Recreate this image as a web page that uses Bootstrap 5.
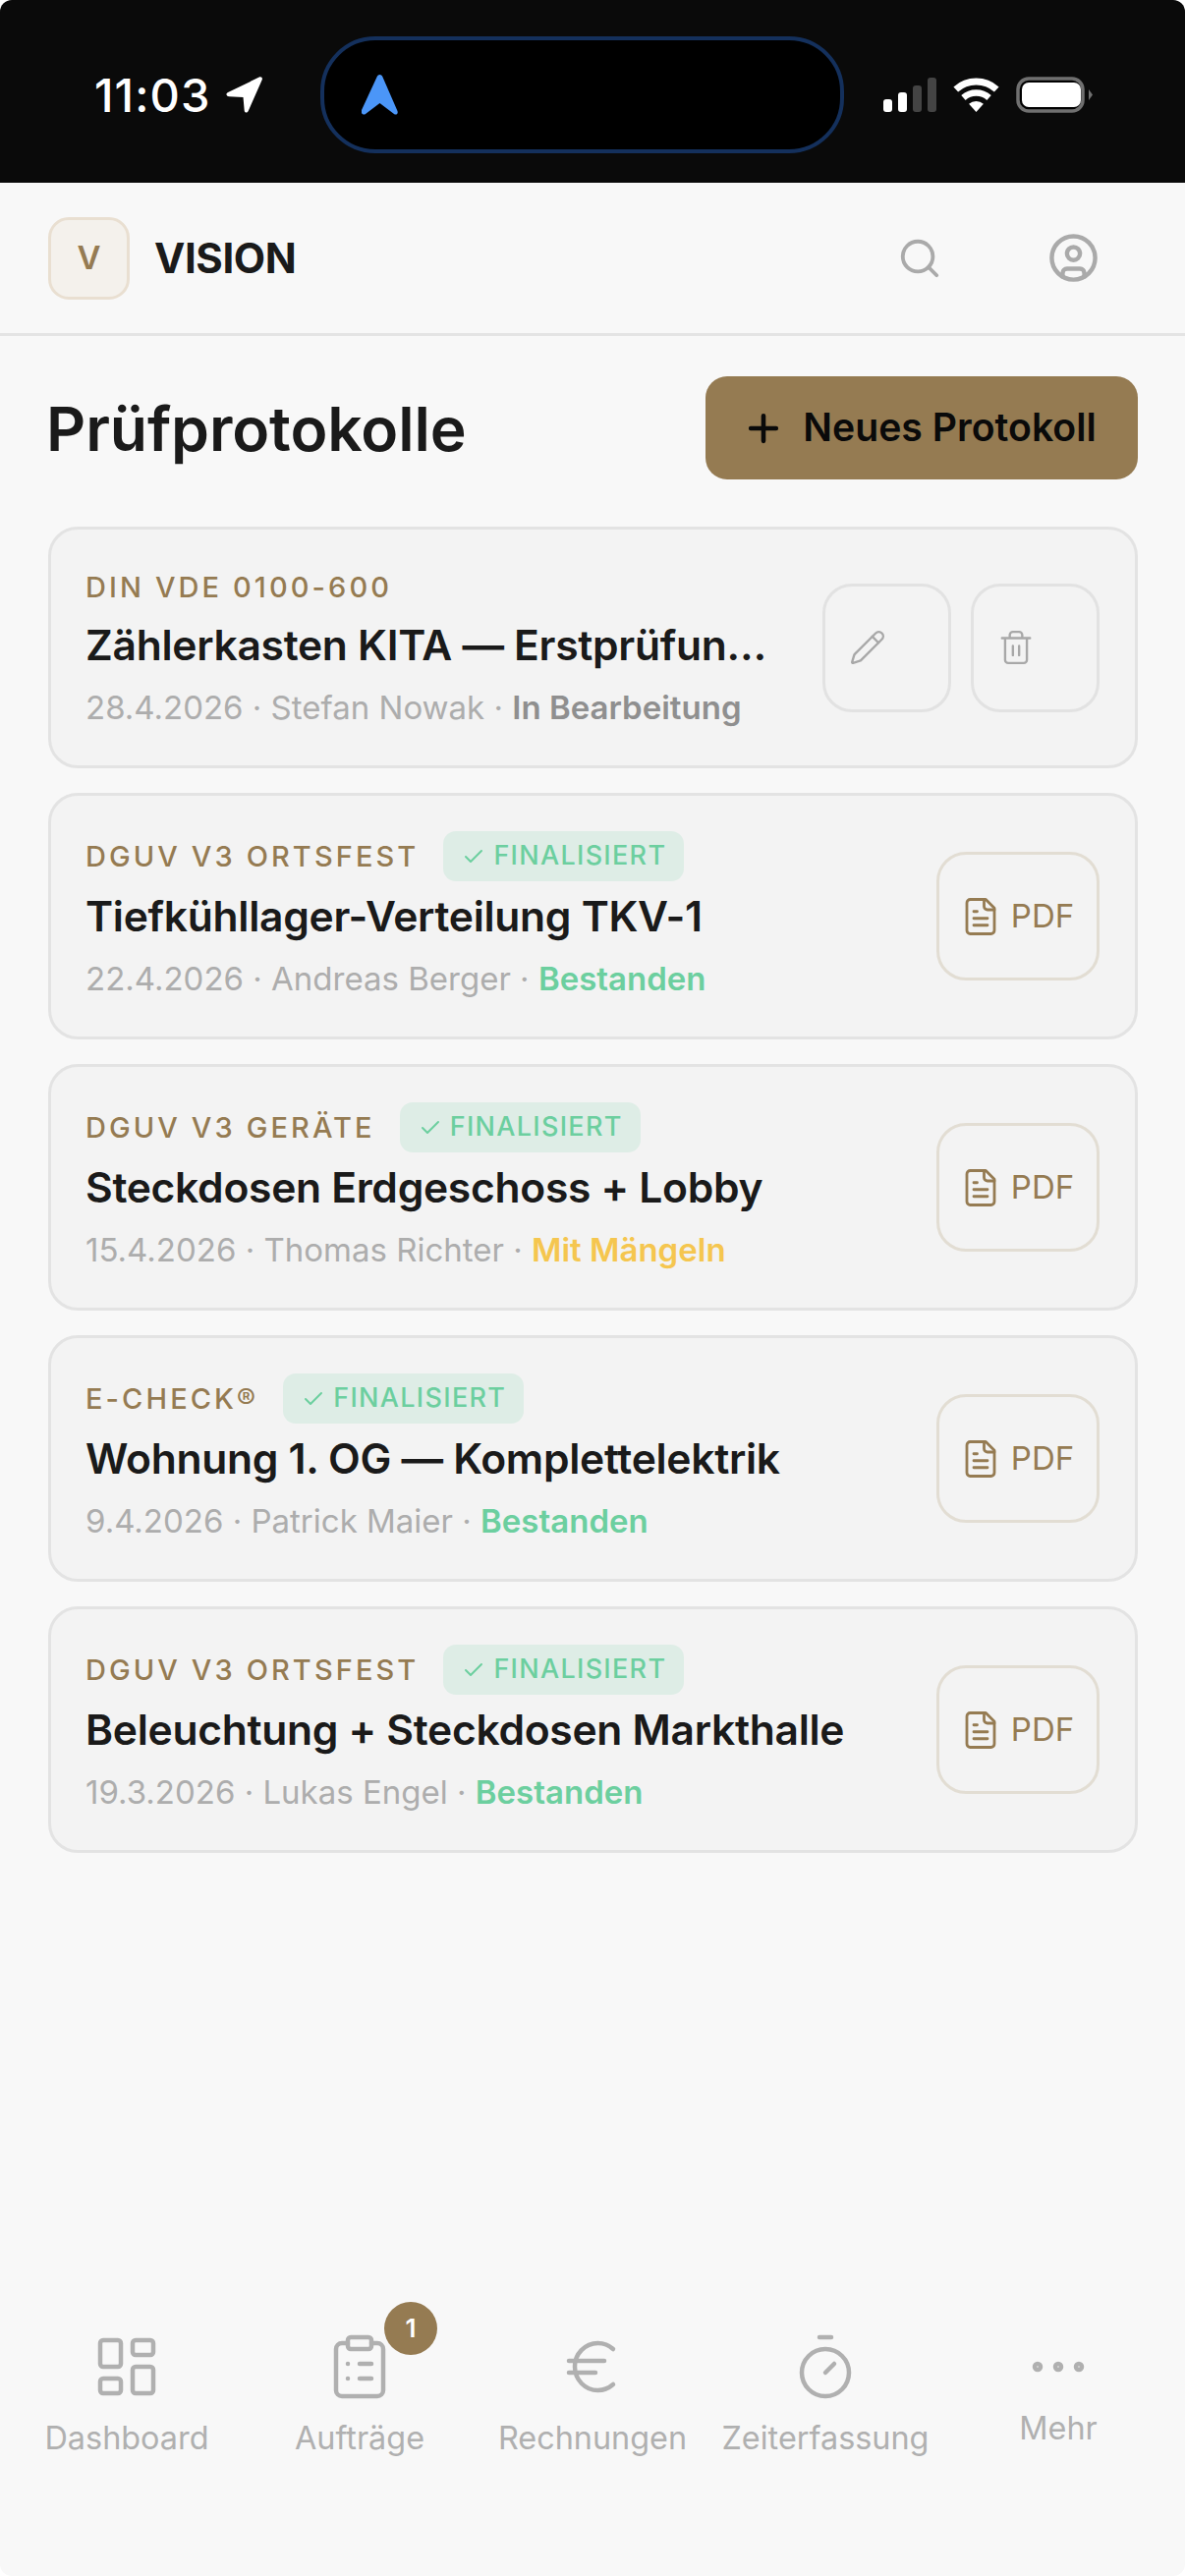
<!DOCTYPE html>
<html lang="de">
<head>
    <meta charset="UTF-8">
    <meta name="viewport" content="width=device-width, initial-scale=1.0">
    <link href="https://cdn.jsdelivr.net/npm/bootstrap@5.3.3/dist/css/bootstrap.min.css" rel="stylesheet">
    <title>Prüfprotokolle</title>
    <style>
        html, body { margin: 0; height: 2622px; background: #fff; }
        body { font-family: Inter, "Noto Sans", sans-serif; color: #1a1a1a; overflow: hidden; }

        .app-frame { width: 1206px; height: 2622px; background: #f8f8f8; border-radius: 12px; overflow: hidden; }

        /* status bar */
        .status-row { height: 186px; background: #0a0a0a; padding-top: 37px; }
        .status-left { width: 326px; padding-left: 96px; gap: 15px; }
        .status-time { color: #fff; font-family: Inter, sans-serif; font-size: 47px; font-weight: 500; letter-spacing: 1.1px; line-height: 1; }
        .island { width: 533px; height: 119px; background: #000; border: 4px solid #14305c; border-radius: 56px; padding-left: 38px; }
        .status-right { padding-left: 40px; gap: 17px; }

        /* header */
        .top-bar { height: 156px; padding: 0 87px 0 49px; border-bottom: 3px solid #e4e4e4; }
        .logo-box { width: 83px; height: 84px; background: #f4f1ec; border: 3px solid #e9dfd1; border-radius: 21px; color: #957b52; font-size: 33px; font-weight: 600; }
        .logo-name { font-size: 42px; font-weight: 700; letter-spacing: -.4px; margin-left: 25px; }
        .top-search { margin-right: 107px; }
        .top-icon { stroke: #aaa; fill: none; stroke-width: 2; stroke-linecap: round; stroke-linejoin: round; display: block; }

        /* content */
        .page-body { padding: 41px 48px 0 49px; }
        .page-title { font-size: 62.4px; font-weight: 600; letter-spacing: -.1px; margin: 4px 0 0 -2px; }
        .new-btn { width: 440px; height: 105px; background: #957b52; border: 0; border-radius: 22px; color: #0a0a0a; font-size: 39.2px; font-weight: 600; gap: 18px; padding: 0 5px 0 0; }
        .new-btn:hover { background: #957b52; color: #0a0a0a; }
        .proto-list { margin-top: 48px; gap: 25px; }
        .proto-card { background: #f3f3f3; border: 3px solid #e3e3e3; border-radius: 30px; padding: 33px 36px 33px 35px; flex-direction: row; align-items: center; }
        .proto-text { min-width: 0; flex: 1 1 0; padding-top: 3px; }
        .proto-head { gap: 25px; }
        .proto-label { color: #957b52; font-size: 29px; font-weight: 500; letter-spacing: 3.1px; line-height: 46px; }
        .done-tag { height: 51px; padding: 0 18px 0 19px; background: #deede6; border-radius: 13px; color: #6ccf9f; font-size: 27px; font-weight: 500; letter-spacing: 1.3px; gap: 8px; }
        .proto-title { font-size: 42.6px; font-weight: 600; letter-spacing: -.3px; line-height: 61px; margin-top: 5px; white-space: nowrap; }
        .proto-meta { font-size: 33px; color: #adadad; line-height: 51px; margin-top: 8px; white-space: nowrap; }
        .st-open { color: #8f8f8f; font-weight: 600; }
        .st-ok { color: #6ccf9f; font-weight: 600; }
        .st-warn { color: #f5c64f; font-weight: 600; }
        .edit-actions { gap: 20px; margin-left: 50px; }
        .square-btn { width: 131px; height: 131px; padding: 0 0 0 24px; background: transparent; border: 3px solid #e2e2e2; border-radius: 30px; justify-content: flex-start; }
        .pdf-btn { width: 166px; height: 131px; padding: 0 2px 0 0; background: transparent; border: 3px solid #e2ddd3; border-radius: 30px; color: #957b52; font-size: 33px; gap: 10px; justify-content: center; margin-left: 20px; }
        .pdf-btn:hover { color: #957b52; }

        /* bottom nav */
        .bottom-nav { display: grid; grid-template-columns: repeat(5, 237px); padding: 0 10px 115px; justify-content: center; }
        .nav-entry { color: #b0b0b0; font-size: 32.4px; line-height: 50px; }
        .nav-icon { width: 72px; height: 72px; stroke: #b0b0b0; fill: none; stroke-width: 1.5; stroke-linecap: round; stroke-linejoin: round; display: block; }
        .nav-slot { width: 72px; height: 72px; position: relative; margin-bottom: 12px; }
        .nav-badge { position: absolute; left: 61px; top: -30px; width: 54px; height: 54px; border-radius: 50%; background: #957b52; color: #fff; font-size: 26px; font-weight: 600; line-height: 1; }
        .nav-slot-more { margin-bottom: 2px; }
    </style>
</head>
<body>
<div class="app-frame d-flex flex-column">

    <div class="status-row d-flex align-items-start">
        <div class="status-left d-flex align-items-center" style="height:119px">
            <span class="status-time">11:03</span>
            <svg width="37" height="37" viewBox="0 0 37 37"><path d="M33.800.6C35.800-.3 37.500 1.200 36.700 3.200L22.800 34.800C21.800 37.300 19 37 18.700 34.500L17.500 21 3.200 20.300C.2 20.100-.6 17.300 2 16z" fill="#fff"/></svg>
        </div>
        <div class="island d-flex align-items-center">
            <svg width="37" height="41" viewBox="0 0 37 41"><path d="M18.500 0C20 0 21 1 21.500 2.500L36.500 37C37.500 40 35 41.500 33 40L18.500 29 4 40C2 41.500-.5 40-.5 37L15.500 2.500C16 1 17 0 18.500 0z" fill="#4b96f8"/></svg>
        </div>
        <div class="status-right d-flex align-items-center" style="height:119px">
            <svg width="54" height="35" viewBox="0 0 54 35">
                <rect x="0" y="22" width="9" height="13" rx="3" fill="#fff"/>
                <rect x="15" y="15" width="9" height="20" rx="3" fill="#fff"/>
                <rect x="30" y="8" width="9" height="27" rx="3" fill="#444"/>
                <rect x="45" y="0" width="9" height="35" rx="3" fill="#444"/>
            </svg>
            <svg width="47" height="35" viewBox="0 0 47 35" fill="none" stroke="#fff">
                <path d="M2.760 12A31 31 0 0 1 44.240 12" stroke-width="7"/>
                <path d="M10.450 20.500A19.500 19.500 0 0 1 36.550 20.500" stroke-width="6.500"/>
                <path d="M23.500 35 16.100 26.800A11 11 0 0 1 30.900 26.800z" fill="#fff" stroke="none"/>
            </svg>
            <svg width="78" height="37" viewBox="0 0 78 37">
                <rect x="2" y="2" width="66" height="33" rx="11" fill="#000" stroke="#707070" stroke-width="3.500"/>
                <rect x="6" y="6" width="60" height="25" rx="7" fill="#fff"/>
                <path d="M74 13 78 18.500 74 24z" fill="#707070"/>
            </svg>
        </div>
    </div>

    <div class="top-bar d-flex align-items-center">
        <div class="logo-box d-flex align-items-center justify-content-center">V</div>
        <span class="logo-name">VISION</span>
        <div class="ms-auto d-flex align-items-center">
            <svg class="top-icon top-search" width="46" height="46" viewBox="0 0 24 24"><circle cx="11" cy="11" r="8"/><path d="m21 21-4.300-4.300"/></svg>
            <svg class="top-icon" width="53" height="53" viewBox="0 0 24 24"><circle cx="12" cy="12" r="10"/><circle cx="12" cy="10" r="3"/><path d="M7 20.660V19a2 2 0 0 1 2-2h6a2 2 0 0 1 2 2v1.660"/></svg>
        </div>
    </div>

    <div class="page-body flex-grow-1">
        <div class="d-flex align-items-center justify-content-between">
            <h1 class="page-title">Prüfprotokolle</h1>
            <button class="btn new-btn d-flex align-items-center justify-content-center">
                <svg width="44" height="44" viewBox="0 0 24 24" fill="none" stroke="#0a0a0a" stroke-width="2.500" stroke-linecap="round"><path d="M5 12h14M12 5v14"/></svg>
                Neues Protokoll
            </button>
        </div>

        <div class="proto-list d-flex flex-column" id="protokolle"></div>
    </div>

    <div class="bottom-nav">
        <div class="nav-entry d-flex flex-column align-items-center">
            <div class="nav-slot"><svg class="nav-icon" viewBox="0 0 24 24"><rect x="3" y="3" width="7" height="9" rx="1"/><rect x="14" y="3" width="7" height="5" rx="1"/><rect x="14" y="12" width="7" height="9" rx="1"/><rect x="3" y="16" width="7" height="5" rx="1"/></svg></div>
            <span>Dashboard</span>
        </div>
        <div class="nav-entry d-flex flex-column align-items-center">
            <div class="nav-slot">
                <svg class="nav-icon" viewBox="0 0 24 24"><rect x="8" y="2" width="8" height="4" rx="1"/><path d="M16 4h2a2 2 0 0 1 2 2v14a2 2 0 0 1-2 2H6a2 2 0 0 1-2-2V6a2 2 0 0 1 2-2h2"/><path d="M12 11h4M12 16h4M8 11h.01M8 16h.01"/></svg>
                <span class="nav-badge d-flex align-items-center justify-content-center">1</span>
            </div>
            <span>Aufträge</span>
        </div>
        <div class="nav-entry d-flex flex-column align-items-center">
            <div class="nav-slot"><svg class="nav-icon" viewBox="0 0 24 24"><path d="M4 10h12M4 14h9M19 6a7.700 7.700 0 0 0-5.200-2A7.900 7.900 0 0 0 6 12c0 4.400 3.500 8 7.800 8 2 0 3.800-.8 5.200-2"/></svg></div>
            <span>Rechnungen</span>
        </div>
        <div class="nav-entry d-flex flex-column align-items-center">
            <div class="nav-slot"><svg class="nav-icon" viewBox="0 0 24 24"><path d="M10 2h4M12 14l3-3"/><circle cx="12" cy="14" r="8"/></svg></div>
            <span>Zeiterfassung</span>
        </div>
        <div class="nav-entry d-flex flex-column align-items-center">
            <div class="nav-slot nav-slot-more"><svg class="nav-icon" viewBox="0 0 24 24"><circle cx="5" cy="12" r="1"/><circle cx="12" cy="12" r="1"/><circle cx="19" cy="12" r="1"/></svg></div>
            <span>Mehr</span>
        </div>
    </div>
</div>

<script>
    const protokolle = [
        { norm: 'DIN VDE 0100-600', title: 'Zählerkasten KITA — Erstprüfun…', meta: '28.4.2026 · Stefan Nowak · ', status: 'In Bearbeitung', cls: 'st-open', done: false },
        { norm: 'DGUV V3 ORTSFEST', title: 'Tiefkühllager-Verteilung TKV-1', meta: '22.4.2026 · Andreas Berger · ', status: 'Bestanden', cls: 'st-ok', done: true },
        { norm: 'DGUV V3 GERÄTE', title: 'Steckdosen Erdgeschoss + Lobby', meta: '15.4.2026 · Thomas Richter · ', status: 'Mit Mängeln', cls: 'st-warn', done: true },
        { norm: 'E-CHECK®', title: 'Wohnung 1. OG — Komplettelektrik', meta: '9.4.2026 · Patrick Maier · ', status: 'Bestanden', cls: 'st-ok', done: true },
        { norm: 'DGUV V3 ORTSFEST', title: 'Beleuchtung + Steckdosen Markthalle', meta: '19.3.2026 · Lukas Engel · ', status: 'Bestanden', cls: 'st-ok', done: true }
    ];

    const checkIcon = '<svg width="24" height="24" viewBox="0 0 24 24" fill="none" stroke="#6ccf9f" stroke-width="2" stroke-linecap="round" stroke-linejoin="round"><path d="M20 6 9 17l-5-5"/></svg>';
    const pencilIcon = '<svg width="38" height="38" viewBox="0 0 24 24" fill="none" stroke="#a8a8a8" stroke-width="1.500" stroke-linecap="round" stroke-linejoin="round"><path d="M21.170 6.810a1 1 0 0 0-3.990-3.990L3.840 16.170a2 2 0 0 0-.5.830l-1.320 4.350a.5.500 0 0 0 .62.620l4.350-1.320a2 2 0 0 0 .83-.5z"/><path d="m15 5 4 4"/></svg>';
    const trashIcon = '<svg width="38" height="38" viewBox="0 0 24 24" fill="none" stroke="#a8a8a8" stroke-width="1.500" stroke-linecap="round" stroke-linejoin="round"><path d="M3 6h18M19 6v14a2 2 0 0 1-2 2H7a2 2 0 0 1-2-2V6M8 6V4a2 2 0 0 1 2-2h4a2 2 0 0 1 2 2v2M10 11v6M14 11v6"/></svg>';
    const fileIcon = '<svg width="42" height="42" viewBox="0 0 24 24" fill="none" stroke="#957b52" stroke-width="1.600" stroke-linecap="round" stroke-linejoin="round"><path d="M15 2H6a2 2 0 0 0-2 2v16a2 2 0 0 0 2 2h12a2 2 0 0 0 2-2V7z"/><path d="M14 2v4a2 2 0 0 0 2 2h4M10 9H8M16 13H8M16 17H8"/></svg>';

    function createCards() {
        let list = document.getElementById('protokolle');
        for (let i = 0; i < protokolle.length; i++) {
            let p = protokolle[i];
            let card = document.createElement('div');
            card.className = 'card proto-card';
            let tag = p.done ? '<span class="done-tag d-inline-flex align-items-center">' + checkIcon + 'FINALISIERT</span>' : '';
            let actions = p.done
                ? '<button class="btn pdf-btn d-flex align-items-center">' + fileIcon + 'PDF</button>'
                : '<div class="edit-actions d-flex"><button class="btn square-btn d-flex align-items-center">' + pencilIcon + '</button><button class="btn square-btn d-flex align-items-center">' + trashIcon + '</button></div>';
            card.innerHTML = '<div class="proto-text">'
                + '<div class="proto-head d-flex align-items-center"><span class="proto-label">' + p.norm + '</span>' + tag + '</div>'
                + '<div class="proto-title">' + p.title + '</div>'
                + '<div class="proto-meta">' + p.meta + '<span class="' + p.cls + '">' + p.status + '</span></div>'
                + '</div>' + actions;
            list.appendChild(card);
        }
    }
    createCards();
</script>
<script src="https://cdn.jsdelivr.net/npm/bootstrap@5.3.3/dist/js/bootstrap.bundle.min.js"></script>
</body>
</html>
